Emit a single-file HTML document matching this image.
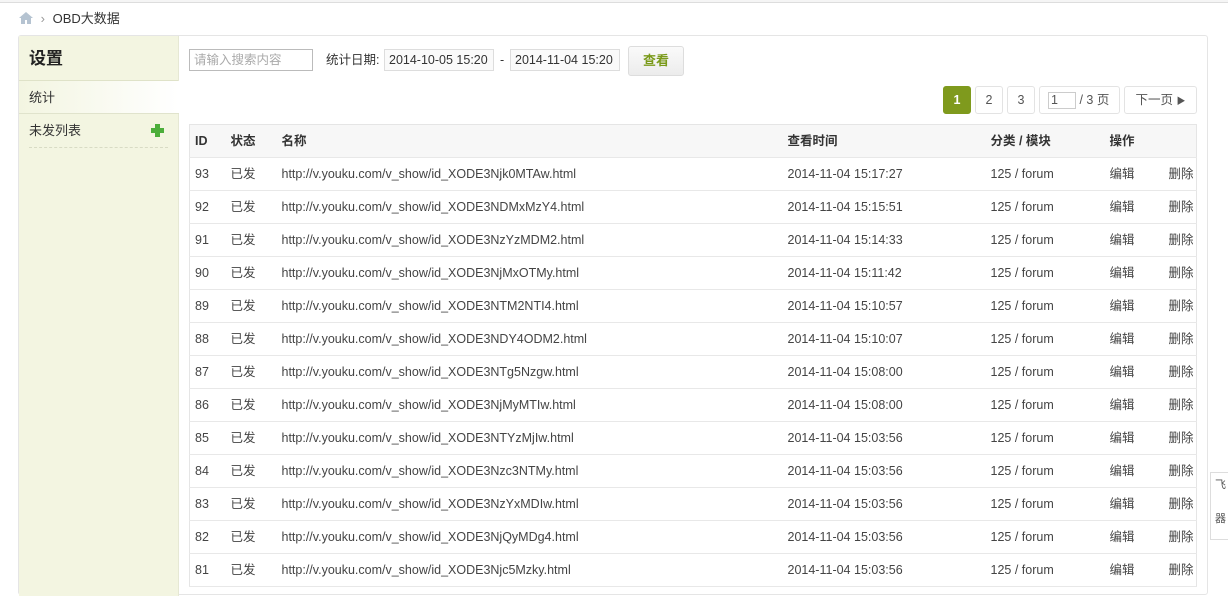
<!DOCTYPE html>
<html><head><meta charset="utf-8"><style>
*{box-sizing:border-box;margin:0;padding:0}
body{width:1228px;height:573px;overflow:hidden;background:#fff;font-family:"Liberation Sans","Noto Sans CJK SC",sans-serif;font-size:12px;line-height:16px;color:#333;position:relative}
.topline{position:absolute;left:0;top:0;width:1228px;height:3px;border-bottom:1px solid #ddd;background:#f5f5f5}
.bc{position:absolute;left:19px;top:11px;font-size:13px;color:#333}
.bc .home{display:inline-block;width:14px;height:12px;vertical-align:-1px}
.main{position:absolute;left:18px;top:35px;width:1190px;height:560px;border:1px solid #e5e5e5;border-radius:3px}
.side{position:absolute;left:0;top:0;width:160px;height:560px;background:#f3f5e1;border-right:1px solid #e6e8d4}
.side h2{height:45px;line-height:45px;padding-left:10px;font-size:17px;font-weight:bold;color:#222;border-bottom:1px solid #dfe2c8}
.side .cur{height:33px;line-height:33px;padding-left:10px;font-size:13px;background:linear-gradient(to right,#f3f5e1,#fff);border-bottom:1px solid #e0e3cc;margin-right:-1px}
.side .it{margin:0 10px;height:34px;line-height:34px;font-size:13px;border-bottom:1px dashed #d8dbc4;position:relative}
.plus{position:absolute;right:4px;top:10px;width:13px;height:13px}
.plus:before,.plus:after{content:"";position:absolute;background:#4cae3a}
.plus:before{left:4px;top:0;width:5px;height:13px}
.plus:after{left:0;top:4px;width:13px;height:5px}
.inp{position:absolute;height:22px;border:1px solid #ccc;line-height:20px;padding-left:4px;font-size:12.5px;background:#fff}
.lbl{position:absolute;font-size:12.5px;line-height:16px}
.btn{position:absolute;left:628px;top:46px;width:56px;height:30px;border:1px solid #ddd;border-radius:3px;background:linear-gradient(#fafafa,#ececec);color:#7a9a1a;font-weight:bold;font-size:13px;text-align:center;line-height:28px}
.pg{position:absolute;top:86px;height:28px;border:1px solid #e3e3e3;border-radius:3px;text-align:center;line-height:26px;font-size:12.5px;color:#555;background:#fff}
.pg.on{background:#7f9a1d;color:#fff;font-weight:bold;border-color:#7f9a1d}
table{position:absolute;left:189px;top:124px;width:1008px;border-collapse:collapse;border:1px solid #e5e5e5}
td,th{height:33px;border-bottom:1px solid #e8e8e8;text-align:left;font-weight:normal;font-size:12.5px;line-height:16px;padding:0;vertical-align:middle;color:#444}
th{background:#f7f7f7;font-weight:bold;color:#333;height:33px}
.c1{padding-left:5px;width:41px}.c2{width:51px}.c3{width:506px}.c4{width:203px}.c5{width:119px}.c6{width:59px}
.wg{position:absolute;left:1210px;top:472px;width:20px;height:68px;border:1px solid #ddd;border-right:none;background:#fff;font-size:11px;color:#555;padding-left:4px}
</style></head><body>
<div class="topline"></div>
<div class="bc"><svg class="home" viewBox="0 0 14 12"><path d="M7 0L0 6h2v6h4V8h2v4h4V6h2z" fill="#b5c3d1"/></svg> <span style="color:#999;margin:0 4px">›</span> OBD大数据</div>
<div class="main">
<div class="side"><h2>设置</h2><div class="cur">统计</div><div class="it">未发列表<span class="plus"></span></div></div>
</div>
<div class="inp" style="left:189px;top:49px;width:124px;color:#aaa;border-color:#bbb">请输入搜索内容</div>
<div class="lbl" style="left:326px;top:52px">统计日期:</div>
<div class="inp" style="left:384px;top:49px;width:110px;background:#fafafa;border-color:#ddd">2014-10-05 15:20</div>
<div class="lbl" style="left:500px;top:52px">-</div>
<div class="inp" style="left:510px;top:49px;width:110px;background:#fafafa;border-color:#ddd">2014-11-04 15:20</div>
<div class="btn">查看</div>
<div class="pg on" style="left:943px;width:28px">1</div>
<div class="pg" style="left:975px;width:28px">2</div>
<div class="pg" style="left:1007px;width:28px">3</div>
<div class="pg" style="left:1039px;width:81px;text-align:left;padding-left:8px"><span style="display:inline-block;width:28px;height:17px;border:1px solid #ccc;line-height:15px;padding-left:2px;vertical-align:middle">1</span> / 3 页</div>
<div class="pg" style="left:1124px;width:73px">下一页 <span style="font-size:9px">▶</span></div>
<table>
<tr><th class="c1">ID</th><th class="c2">状态</th><th class="c3">名称</th><th class="c4">查看时间</th><th class="c5">分类 / 模块</th><th class="c6">操作</th><th></th></tr>
<tr><td class="c1">93</td><td>已发</td><td>http://v.youku.com/v_show/id_XODE3Njk0MTAw.html</td><td>2014-11-04 15:17:27</td><td>125 / forum</td><td>编辑</td><td>删除</td></tr>
<tr><td class="c1">92</td><td>已发</td><td>http://v.youku.com/v_show/id_XODE3NDMxMzY4.html</td><td>2014-11-04 15:15:51</td><td>125 / forum</td><td>编辑</td><td>删除</td></tr>
<tr><td class="c1">91</td><td>已发</td><td>http://v.youku.com/v_show/id_XODE3NzYzMDM2.html</td><td>2014-11-04 15:14:33</td><td>125 / forum</td><td>编辑</td><td>删除</td></tr>
<tr><td class="c1">90</td><td>已发</td><td>http://v.youku.com/v_show/id_XODE3NjMxOTMy.html</td><td>2014-11-04 15:11:42</td><td>125 / forum</td><td>编辑</td><td>删除</td></tr>
<tr><td class="c1">89</td><td>已发</td><td>http://v.youku.com/v_show/id_XODE3NTM2NTI4.html</td><td>2014-11-04 15:10:57</td><td>125 / forum</td><td>编辑</td><td>删除</td></tr>
<tr><td class="c1">88</td><td>已发</td><td>http://v.youku.com/v_show/id_XODE3NDY4ODM2.html</td><td>2014-11-04 15:10:07</td><td>125 / forum</td><td>编辑</td><td>删除</td></tr>
<tr><td class="c1">87</td><td>已发</td><td>http://v.youku.com/v_show/id_XODE3NTg5Nzgw.html</td><td>2014-11-04 15:08:00</td><td>125 / forum</td><td>编辑</td><td>删除</td></tr>
<tr><td class="c1">86</td><td>已发</td><td>http://v.youku.com/v_show/id_XODE3NjMyMTIw.html</td><td>2014-11-04 15:08:00</td><td>125 / forum</td><td>编辑</td><td>删除</td></tr>
<tr><td class="c1">85</td><td>已发</td><td>http://v.youku.com/v_show/id_XODE3NTYzMjIw.html</td><td>2014-11-04 15:03:56</td><td>125 / forum</td><td>编辑</td><td>删除</td></tr>
<tr><td class="c1">84</td><td>已发</td><td>http://v.youku.com/v_show/id_XODE3Nzc3NTMy.html</td><td>2014-11-04 15:03:56</td><td>125 / forum</td><td>编辑</td><td>删除</td></tr>
<tr><td class="c1">83</td><td>已发</td><td>http://v.youku.com/v_show/id_XODE3NzYxMDIw.html</td><td>2014-11-04 15:03:56</td><td>125 / forum</td><td>编辑</td><td>删除</td></tr>
<tr><td class="c1">82</td><td>已发</td><td>http://v.youku.com/v_show/id_XODE3NjQyMDg4.html</td><td>2014-11-04 15:03:56</td><td>125 / forum</td><td>编辑</td><td>删除</td></tr>
<tr><td class="c1">81</td><td>已发</td><td>http://v.youku.com/v_show/id_XODE3Njc5Mzky.html</td><td>2014-11-04 15:03:56</td><td>125 / forum</td><td>编辑</td><td>删除</td></tr>
</table>
<div class="wg"><div style="margin-top:4px">飞</div><div style="margin-top:18px">器</div></div>
</body></html>
